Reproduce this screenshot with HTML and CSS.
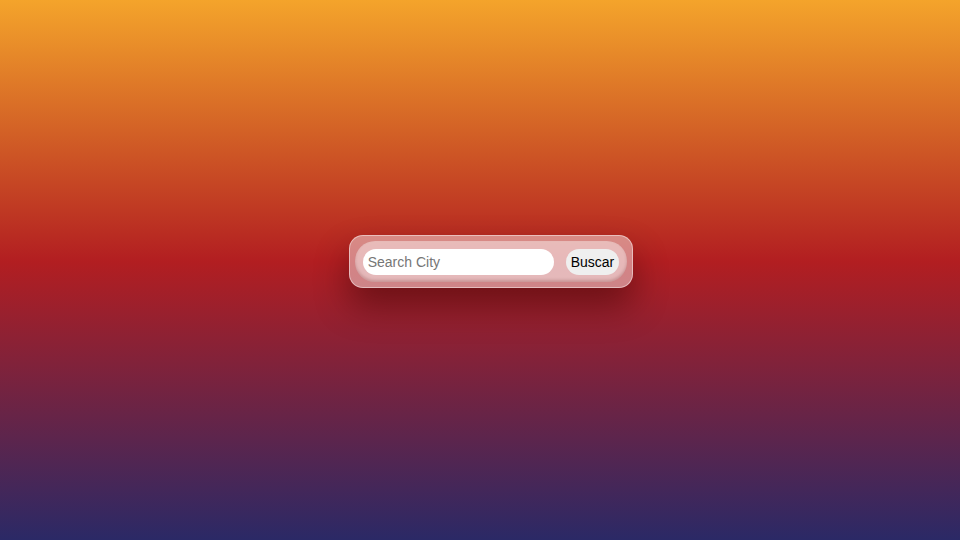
FILE: index.html
```html
<!DOCTYPE html>
<html lang="en">
<head>
<meta charset="utf-8">
<title>Weather</title>
<link rel="stylesheet" href="styles.css">
</head>
<body>
<main class="page">
  <div class="search-card">
    <form class="search-bar">
      <input class="search-input" type="text" placeholder="Search City">
      <button class="search-btn" type="button">Buscar</button>
    </form>
  </div>
</main>
</body>
</html>
```
FILE: styles.css
```css
html, body {
  margin: 0;
  padding: 0;
  height: 100%;
}
body {
  background: linear-gradient(to bottom, #f4a42b 0%, #b21e21 48.5%, #2b2966 100%);
  font-family: "Liberation Sans", Arial, sans-serif;
}
.page {
  height: 540px;
  box-sizing: border-box;
  display: flex;
  align-items: flex-start;
  justify-content: center;
  padding: 235px 0 0 22px;
}
.search-card {
  padding: 5px;
  border: 1px solid rgba(255, 255, 255, 0.45);
  border-radius: 14px;
  background: rgba(255, 255, 255, 0.45);
  box-shadow: 0 18px 34px rgba(40, 0, 0, 0.45);
}
.search-bar {
  display: flex;
  align-items: center;
  gap: 12px;
  padding: 8px 8px 7px 8px;
  border-radius: 20px;
  background: rgba(255, 255, 255, 0.43);
  box-shadow: inset 0 -2px 3px rgba(120, 40, 40, 0.25);
}
.search-input {
  width: 191px;
  height: 26px;
  box-sizing: border-box;
  border: none;
  outline: none;
  border-radius: 13px;
  background: #ffffff;
  padding: 0 5px;
  font-family: "Liberation Sans", Arial, sans-serif;
  font-size: 14px;
  color: #222;
}
.search-input::placeholder {
  color: #767676;
}
.search-btn {
  height: 26px;
  box-sizing: border-box;
  border: none;
  border-radius: 13px;
  background: #efefef;
  padding: 0 5px;
  font-family: "Liberation Sans", Arial, sans-serif;
  font-size: 14px;
  color: #000;
  cursor: pointer;
}
```
